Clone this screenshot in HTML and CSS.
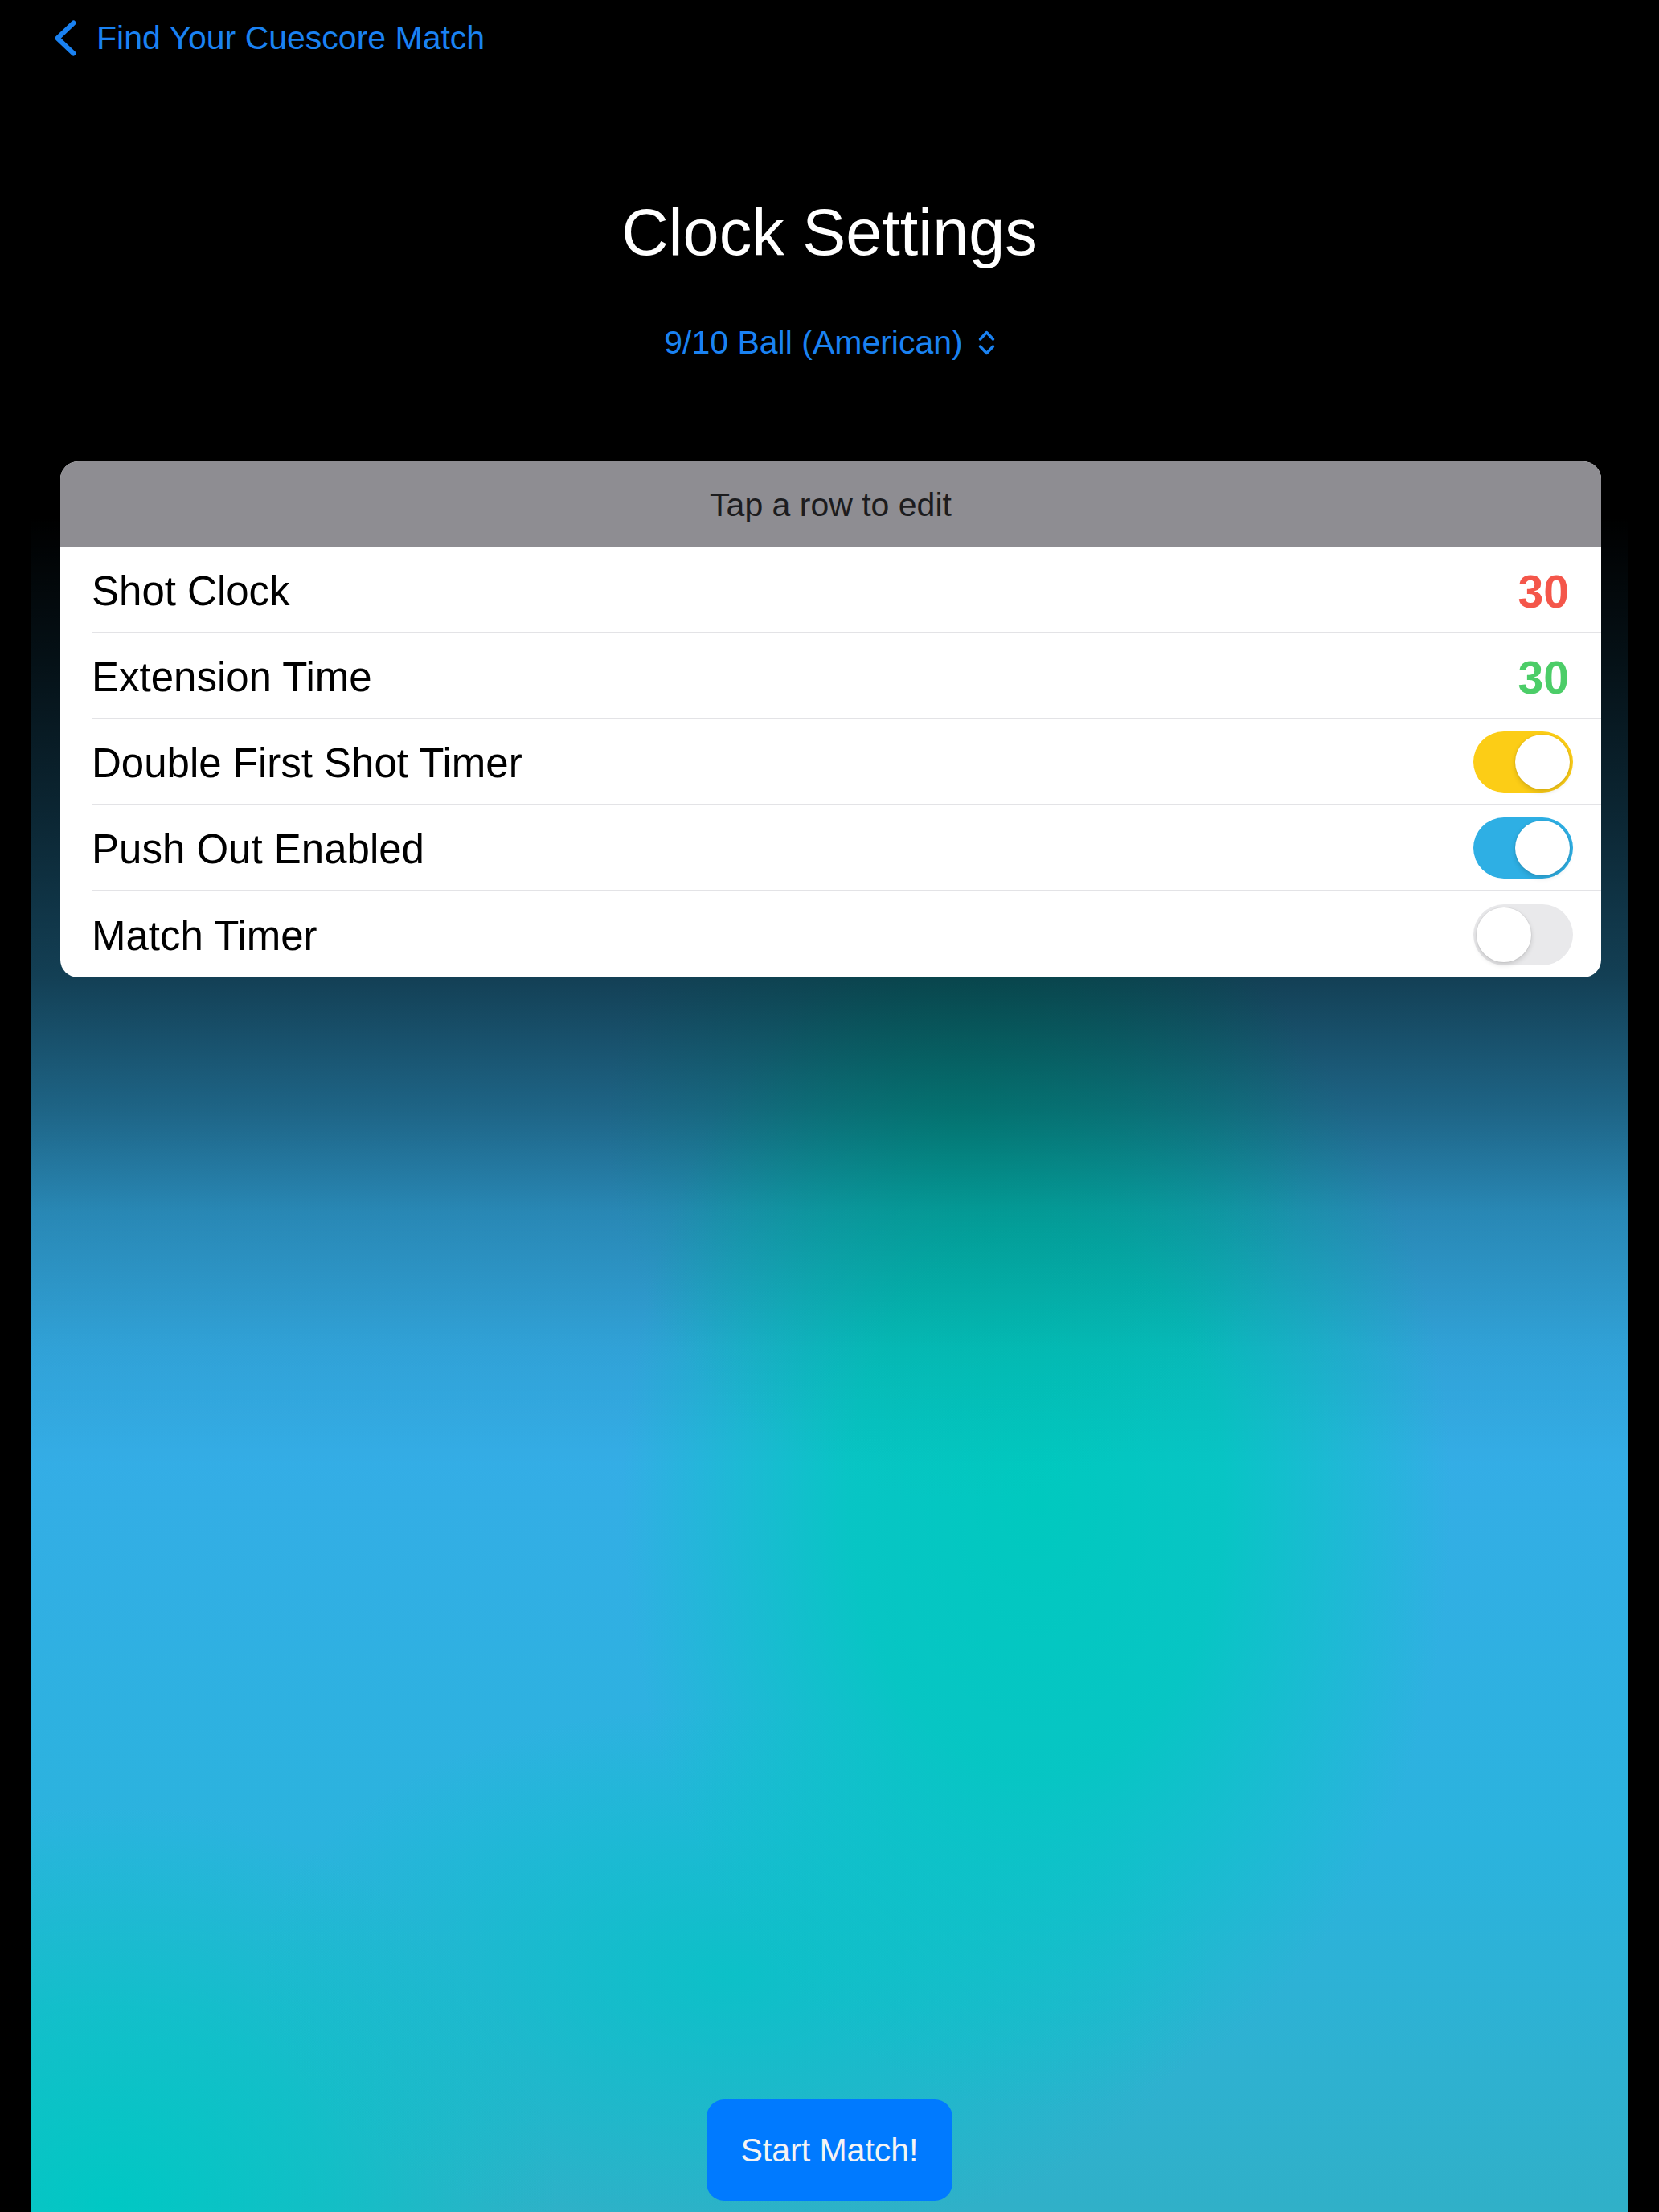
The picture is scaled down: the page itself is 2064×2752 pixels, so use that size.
FILE: index.html
```html
<!DOCTYPE html>
<html lang="en">
<head>
<meta charset="utf-8">
<title>Clock Settings</title>
<link rel="stylesheet" href="styles.css">
</head>
<body>
<div class="screen">
  <nav class="topbar">
    <a class="back" href="#">
      <svg class="back-icon" viewBox="0 0 27 45" width="27" height="45"><polyline points="23.5,3.5 3.5,22.5 23.5,41.5" fill="none" stroke="currentColor" stroke-width="6" stroke-linecap="round" stroke-linejoin="round"/></svg>
      <span>Find Your Cuescore Match</span>
    </a>
  </nav>
  <h1 class="title">Clock Settings</h1>
  <div class="picker">
    <span>9/10 Ball (American)</span>
    <svg class="updown" viewBox="0 0 21 31" width="21" height="31"><polyline points="2.5,11 10.5,2.5 18.5,11" fill="none" stroke="currentColor" stroke-width="3.5" stroke-linecap="round" stroke-linejoin="round"/><polyline points="2.5,20 10.5,28.5 18.5,20" fill="none" stroke="currentColor" stroke-width="3.5" stroke-linecap="round" stroke-linejoin="round"/></svg>
  </div>
  <main class="stage">
    <section class="card">
      <header class="card-head">Tap a row to edit</header>
      <div class="row"><div class="row-inner"><span class="label">Shot Clock</span><span class="value value-red">30</span></div></div>
      <div class="row"><div class="row-inner"><span class="label">Extension Time</span><span class="value value-green">30</span></div></div>
      <div class="row"><div class="row-inner"><span class="label">Double First Shot Timer</span><span class="switch switch-yellow"><span class="knob"></span></span></div></div>
      <div class="row"><div class="row-inner"><span class="label">Push Out Enabled</span><span class="switch switch-blue"><span class="knob"></span></span></div></div>
      <div class="row row-last"><div class="row-inner"><span class="label">Match Timer</span><span class="switch switch-off"><span class="knob"></span></span></div></div>
    </section>
    <button class="start-btn" type="button">Start Match!</button>
  </main>
</div>
</body>
</html>
```

FILE: styles.css
```css
* { box-sizing: border-box; }
html, body { margin: 0; padding: 0; background: #000; }
body { font-family: "Liberation Sans", Arial, sans-serif; }

.screen {
  width: 2064px;
  height: 2752px;
  display: flex;
  flex-direction: column;
  background: #000;
  overflow: hidden;
}

.topbar {
  height: 94px;
  display: flex;
  align-items: center;
  padding-left: 68px;
}
.back {
  display: flex;
  align-items: center;
  gap: 25px;
  color: #1a82f2;
  text-decoration: none;
  font-size: 41px;
  line-height: 1;
}
.back-icon { display: block; }

.title {
  margin: 155px 0 0;
  text-align: center;
  color: #fff;
  font-weight: 400;
  font-size: 81px;
  line-height: 80px;
}

.picker {
  margin-top: 77px;
  height: 41px;
  display: flex;
  justify-content: center;
  align-items: center;
  gap: 19px;
  color: #1a82f2;
  font-size: 41px;
  line-height: 41px;
}
.updown { display: block; }

.stage {
  flex: 1;
  margin: 198px 39px 0;
  display: flex;
  flex-direction: column;
  background:
    linear-gradient(to bottom, rgba(0,0,0,1) 0%, rgba(0,0,0,0.9) 8%, rgba(0,0,0,0.76) 18%, rgba(0,0,0,0.62) 27%, rgba(0,0,0,0.4) 35%, rgba(0,0,0,0.2) 41%, rgba(0,0,0,0.06) 49%, rgba(0,0,0,0) 56%),
    radial-gradient(ellipse 22% 22% at 58% 36%, rgba(0,190,178,0.75) 0%, rgba(0,190,178,0) 100%),
    radial-gradient(ellipse 26% 36% at 63% 58%, rgba(0,201,191,1) 0%, rgba(0,201,191,0.85) 45%, rgba(0,201,191,0) 100%),
    radial-gradient(ellipse 30% 16% at 44% 86%, rgba(4,196,196,0.8) 0%, rgba(4,196,196,0) 100%),
    radial-gradient(ellipse 28% 24% at 5% 100%, rgba(0,200,196,1) 0%, rgba(0,200,196,0.6) 50%, rgba(0,200,196,0) 100%),
    linear-gradient(to bottom, #2f9fd6 0%, #34ade6 55%, #2bb3de 78%, #30b0c8 100%);
}

.card {
  margin: -71px 33px 0 36px;
  background: #fff;
  border-radius: 22px;
  overflow: hidden;
}
.card-head {
  height: 107px;
  background: #8e8d92;
  color: #1c1c1e;
  font-size: 41px;
  display: flex;
  align-items: center;
  justify-content: center;
  padding-top: 2px;
}
.row {
  height: 107px;
  padding-left: 39px;
}
.row-inner {
  height: 107px;
  display: flex;
  align-items: center;
  justify-content: space-between;
  padding-right: 35px;
  padding-top: 4px;
  border-bottom: 2px solid #e3e3e6;
}
.row-last .row-inner { border-bottom: none; }
.label {
  font-size: 51px;
  color: #000;
}
.value {
  font-size: 57px;
  font-weight: 700;
  margin-right: 5px;
}
.value-red { color: #f4564a; }
.value-green { color: #4ccd68; }

.switch {
  width: 124px;
  height: 76px;
  border-radius: 38px;
  display: flex;
  align-items: center;
  padding: 0 4px;
  margin-top: -4px;
}
.switch-yellow { background: #fccd16; justify-content: flex-end; }
.switch-blue { background: #2eafe4; justify-content: flex-end; }
.switch-off { background: #e9e9eb; justify-content: flex-start; }
.knob {
  width: 68px;
  height: 68px;
  border-radius: 50%;
  background: #fff;
  box-shadow: 0 3px 6px rgba(0,0,0,0.15), 0 0 0 1px rgba(0,0,0,0.04);
}

.start-btn {
  margin: auto auto 14px;
  width: 306px;
  height: 126px;
  border: none;
  border-radius: 22px;
  background: #007aff;
  color: #f4f4f4;
  font-family: "Liberation Sans", Arial, sans-serif;
  font-size: 41px;
}
```
